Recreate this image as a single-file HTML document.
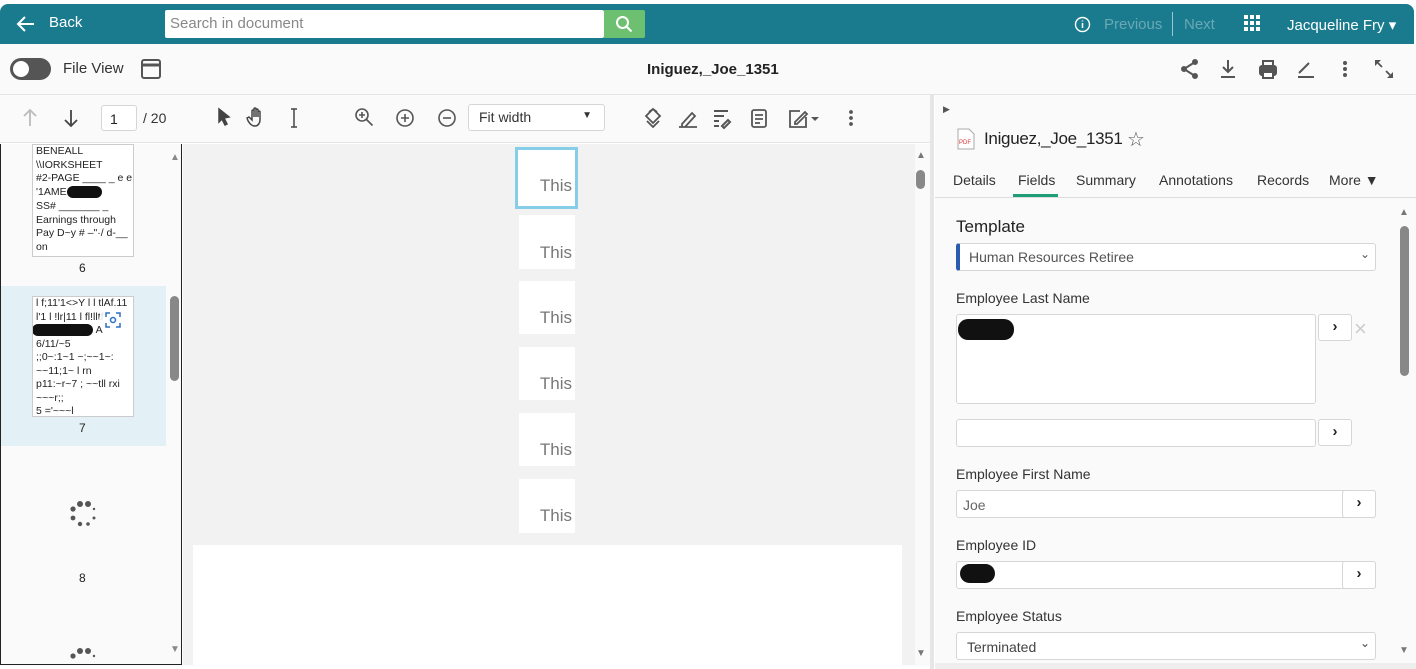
<!DOCTYPE html>
<html><head><meta charset="utf-8"><style>
*{box-sizing:border-box;margin:0;padding:0}
html,body{width:1416px;height:669px;overflow:hidden}
body{background:#fff;font-family:"Liberation Sans",sans-serif;color:#222;position:relative}
.a{position:absolute}
.hdr{left:0;top:4px;width:1414px;height:40px;background:#1a7b8e;border-radius:8px 8px 0 0}
.w{color:#fff;font-size:15px}
.lbl{font-size:14px;color:#333}
.inp{background:#fff;border:1px solid #d6d6d6;border-radius:3px}
.btn{background:#fff;border:1px solid #d6d6d6;border-radius:3px;font-weight:bold;font-size:15px;text-align:center;color:#222}
.pg{background:#fff;width:56px;font-size:17px;color:#777;text-align:right;padding-right:3px}
.th{font-size:10px;line-height:13.5px;color:#222;white-space:nowrap;overflow:hidden;padding-left:3px;background:#fff;border:1px solid #ccc}
</style></head><body>
<div class="a hdr"></div>
<svg class="a" style="left:16px;top:14px" width="20" height="20"><path d="M18 10H3M9 3L2 10l7 7" stroke="#fff" stroke-width="2" fill="none"/></svg>
<div class="a w" style="left:49px;top:14px">Back</div>
<div class="a" style="left:165px;top:10px;width:439px;height:28px;background:#fff;border-radius:2px"></div>
<div class="a" style="left:170px;top:15px;font-size:15px;color:#888">Search in document</div>
<div class="a" style="left:604px;top:10px;width:41px;height:28px;background:#6cc070;border-radius:0 2px 2px 0"></div>
<svg class="a" style="left:615px;top:15px" width="18" height="18"><circle cx="7.5" cy="7.5" r="5.5" stroke="#fff" stroke-width="2" fill="none"/><path d="M11.5 11.5l5 5" stroke="#fff" stroke-width="2"/></svg>
<svg class="a" style="left:1074px;top:16px" width="17" height="17"><circle cx="8.5" cy="8.5" r="7" stroke="#fff" stroke-width="1.4" fill="none"/><path d="M8.5 7v5M8.5 4.5v1" stroke="#fff" stroke-width="1.5"/></svg>
<div class="a" style="left:1104px;top:16px;font-size:15px;color:#6aa8b5">Previous</div>
<div class="a" style="left:1172px;top:12px;width:1px;height:24px;background:#9cc5cf"></div>
<div class="a" style="left:1184px;top:16px;font-size:15px;color:#6aa8b5">Next</div>
<svg class="a" style="left:1244px;top:15px" width="16" height="16" fill="#fff"><rect x="0" y="0" width="4" height="4"/><rect x="6" y="0" width="4" height="4"/><rect x="12" y="0" width="4" height="4"/><rect x="0" y="6" width="4" height="4"/><rect x="6" y="6" width="4" height="4"/><rect x="12" y="6" width="4" height="4"/><rect x="0" y="12" width="4" height="4"/><rect x="6" y="12" width="4" height="4"/><rect x="12" y="12" width="4" height="4"/></svg>
<div class="a w" style="left:1287px;top:16px">Jacqueline Fry ▾</div>

<div class="a" style="left:0;top:44px;width:1416px;height:51px;background:#fafafa;border-bottom:1px solid #e4e4e4"></div>
<div class="a" style="left:10px;top:58px;width:41px;height:22px;border-radius:11px;background:#555"></div>
<div class="a" style="left:13px;top:61px;width:16px;height:16px;border-radius:8px;background:#fff"></div>
<div class="a" style="left:63px;top:60px;font-size:15px;color:#333">File View</div>
<svg class="a" style="left:140px;top:58px" width="22" height="22"><rect x="2" y="2" width="18" height="18" rx="2" stroke="#555" stroke-width="2" fill="none"/><path d="M2 7h18" stroke="#555" stroke-width="3"/></svg>
<div class="a" style="left:647px;top:61px;font-size:15px;font-weight:bold;color:#222">Iniguez,_Joe_1351</div>
<svg class="a" style="left:1180px;top:59px" width="220" height="22" fill="none" stroke="#555" stroke-width="2">
<circle cx="15" cy="3" r="2" fill="#555"/><circle cx="4" cy="10" r="2" fill="#555"/><circle cx="15" cy="17" r="2" fill="#555"/><path d="M15 3L4 10l11 7"/>
<path d="M48 1v12M43 8l5 5 5-5M41 18h14"/>
<rect x="80" y="7" width="16" height="9" rx="2" fill="#555"/><rect x="83" y="2" width="10" height="5"/><rect x="83" y="13" width="10" height="6" fill="#fff"/>
<path d="M119 14l10-10M118 18h16"/>
<circle cx="165" cy="4" r="1" fill="#555"/><circle cx="165" cy="10" r="1" fill="#555"/><circle cx="165" cy="16" r="1" fill="#555"/>
<path d="M198 4l4 4M210 16l-4-4" stroke-width="1.8"/><path d="M195 1h6l-6 6zM213 19h-6l6-6z" fill="#555" stroke="none"/></svg>

<div class="a" style="left:0;top:95px;width:930px;height:48px;background:#fafafa;border-bottom:1px solid #e4e4e4"></div>
<svg class="a" style="left:20px;top:108px" width="60" height="20" fill="none" stroke-width="1.8"><path d="M10 2v16M4 8l6-6 6 6" stroke="#bbb"/><path d="M51 2v16M45 12l6 6 6-6" stroke="#444"/></svg>
<div class="a inp" style="left:101px;top:105px;width:36px;height:26px;font-size:14px;padding:5px 8px">1</div>
<div class="a lbl" style="left:143px;top:110px">/ 20</div>
<svg class="a" style="left:215px;top:106px" width="90" height="24" fill="none" stroke="#444" stroke-width="1.5"><path d="M4 3l10 8-5 1 3 6-2 1-3-6-3 3z" fill="#444"/><path d="M40 20c-4 0-7-4-8-8l2-1 3 3V5a1 1 0 012 0v6V3a1 1 0 012 0v8V4a1 1 0 012 0v7V6a1 1 0 012 0v8c0 3-2 6-5 6z"/><path d="M76 3h6M79 3v18M76 21h6"/></svg>
<svg class="a" style="left:353px;top:106px" width="110" height="24" fill="none" stroke="#555" stroke-width="1.6"><circle cx="9" cy="9" r="6"/><path d="M13.5 13.5l6 6M9 6v6M6 9h6"/><circle cx="52" cy="12" r="8"/><path d="M52 8v8M48 12h8"/><circle cx="94" cy="12" r="8"/><path d="M90 12h8"/></svg>
<div class="a inp" style="left:468px;top:104px;width:137px;height:27px;font-size:14px;padding:4px 10px;color:#333">Fit width<span style="position:absolute;right:12px;top:5px;font-size:10px">▼</span></div>
<svg class="a" style="left:642px;top:106px" width="220" height="24" fill="none" stroke="#555" stroke-width="1.8">
<path d="M11 3l7 7-7 7-7-7zM7 6l4-3 4 3M5 15l6 6 6-6"/>
<path d="M40 18l10-11 3 3-10 11h-3zM37 21h18" /><path d="M72 5h14M72 10h10M72 15h5M72 20h5M80 20l6-6 2 2-6 6z" stroke-width="2"/>
<rect x="110" y="4" width="14" height="17" rx="2"/><path d="M113 9h8M113 13h8M113 17h5"/>
<path d="M158 5h-10v16h16V11M153 16l10-10 2 2-10 10h-2z"/><path d="M169 11l4 4 4-4z" fill="#555" stroke="none"/>
<circle cx="209" cy="6" r="1" fill="#555"/><circle cx="209" cy="12" r="1" fill="#555"/><circle cx="209" cy="18" r="1" fill="#555"/></svg>

<!-- left panel -->
<div class="a" style="left:0;top:144px;width:182px;height:521px;border:1px solid #222;border-top:none;background:#fafafa;overflow:hidden">
<div class="a th" style="left:31px;top:0;width:102px;height:113px;line-height:13.7px;font-size:10.5px">BENEALL<br>\\IORKSHEET<br>#2-PAGE ____ _ e e<br>'1AME<span style="background:#111;border-radius:6px">&nbsp;&nbsp;&nbsp;&nbsp;&nbsp;&nbsp;&nbsp;&nbsp;&nbsp;&nbsp;&nbsp;&nbsp;</span><br>SS# _______ _<br>Earnings through<br>Pay D~y # –"·/ d-__<br>on<br>~</div>
<div class="a" style="left:78px;top:117px;font-size:12px">6</div>
<div class="a" style="left:0;top:142px;width:165px;height:160px;background:#e3f0f5"></div>
<div class="a th" style="left:31px;top:152px;width:102px;height:121px;font-size:10.5px">l f;11'1&lt;&gt;Y l l tlAf.11<br>l'1 l !lr|11 l fl!lltf<br><span style="background:#111;border-radius:8px;margin-left:-4px">&nbsp;&nbsp;&nbsp;&nbsp;&nbsp;&nbsp;&nbsp;&nbsp;&nbsp;&nbsp;&nbsp;&nbsp;&nbsp;&nbsp;&nbsp;&nbsp;&nbsp;&nbsp;&nbsp;&nbsp;&nbsp;</span> A<br>6/11/~5<br>;;0~:1~1 ~;~~1~:<br>~~11;1~ l rn<br>p11:~r~7 ; ~~tll rxi<br>~~~r;;<br>5 ='~~~l</div>
<div class="a" style="left:98px;top:162px;width:28px;height:28px;border-radius:14px;background:rgba(255,255,255,.85)"></div>
<svg class="a" style="left:104px;top:168px" width="16" height="16" fill="none" stroke="#2f6fc4" stroke-width="1.5"><path d="M1 5V1h4M11 1h4v4M15 11v4h-4M5 15H1v-4"/><circle cx="8" cy="8" r="2.5"/></svg>
<div class="a" style="left:78px;top:277px;font-size:12px">7</div>
<svg class="a" style="left:68px;top:357px" width="30" height="30" fill="#555"><circle cx="11" cy="3" r="3"/><circle cx="19" cy="3" r="3"/><circle cx="4" cy="8" r="2.6"/><circle cx="4" cy="17" r="2.4"/><circle cx="11" cy="23" r="2.2"/><circle cx="19" cy="23" r="1.8"/><circle cx="25" cy="17" r="1.5"/><circle cx="25" cy="8" r="1.2"/></svg>
<div class="a" style="left:78px;top:427px;font-size:12px">8</div>
<svg class="a" style="left:68px;top:504px" width="30" height="20" fill="#555"><circle cx="11" cy="3" r="3"/><circle cx="19" cy="3" r="3"/><circle cx="4" cy="8" r="2.6"/><circle cx="25" cy="8" r="1.2"/></svg>
<div class="a" style="left:168px;top:0;width:13px;height:521px;background:#fafafa"></div>
<div class="a" style="left:169px;top:8px;font-size:10px;color:#888">▲</div>
<div class="a" style="left:169px;top:152px;width:9px;height:85px;border-radius:5px;background:#888"></div>
<div class="a" style="left:169px;top:500px;font-size:10px;color:#888">▼</div>
</div>

<!-- center -->
<div class="a" style="left:183px;top:144px;width:732px;height:521px;background:#f2f2f2"></div>
<div class="a" style="left:193px;top:545px;width:709px;height:120px;background:#fff"></div>
<div class="a" style="left:515px;top:147px;width:63px;height:62px;border:3px solid #86cde8;background:#fff"></div>
<div class="a" style="left:519px;top:176px;width:56px;font-size:17px;color:#777;text-align:right;padding-right:3px">This</div>
<div class="a pg" style="left:519px;top:215px;height:54px;padding-top:28px">This</div>
<div class="a pg" style="left:519px;top:281px;height:53px;padding-top:27px">This</div>
<div class="a pg" style="left:519px;top:347px;height:53px;padding-top:27px">This</div>
<div class="a pg" style="left:519px;top:413px;height:53px;padding-top:27px">This</div>
<div class="a pg" style="left:519px;top:479px;height:54px;padding-top:27px">This</div>
<div class="a" style="left:915px;top:144px;width:15px;height:521px;background:#fafafa"></div>
<div class="a" style="left:916px;top:150px;font-size:10px;color:#777">▲</div>
<div class="a" style="left:916px;top:170px;width:9px;height:19px;border-radius:5px;background:#888"></div>
<div class="a" style="left:916px;top:648px;font-size:10px;color:#777">▼</div>
<div class="a" style="left:930px;top:95px;width:4px;height:574px;background:#e6e6e6"></div>

<!-- right panel -->
<div class="a" style="left:935px;top:95px;width:481px;height:574px;background:#fafafa"></div>
<div class="a" style="left:943px;top:104px;font-size:9px;color:#555">▶</div>
<svg class="a" style="left:957px;top:128px" width="18" height="22"><path d="M1 1h11l5 5v15H1z" fill="#fff" stroke="#aaa"/><text x="2" y="16" font-size="6" fill="#d33" font-family="Liberation Sans">PDF</text></svg>
<div class="a" style="left:984px;top:129px;font-size:17px;color:#222;letter-spacing:-0.3px">Iniguez,_Joe_1351</div>
<div class="a" style="left:1127px;top:127px;font-size:20px;color:#555">☆</div>
<div class="a lbl" style="left:953px;top:172px">Details</div>
<div class="a lbl" style="left:1018px;top:172px">Fields</div>
<div class="a" style="left:1013px;top:194px;width:45px;height:3px;background:#1f9d77"></div>
<div class="a lbl" style="left:1076px;top:172px">Summary</div>
<div class="a lbl" style="left:1159px;top:172px">Annotations</div>
<div class="a lbl" style="left:1257px;top:172px">Records</div>
<div class="a lbl" style="left:1329px;top:172px">More ▼</div>
<div class="a" style="left:935px;top:197px;width:481px;height:1px;background:#ddd"></div>
<div class="a" style="left:1397px;top:205px;width:19px;height:455px;background:#fafafa"></div>
<div class="a" style="left:1399px;top:207px;font-size:10px;color:#777">▲</div>
<div class="a" style="left:1400px;top:226px;width:9px;height:150px;border-radius:5px;background:#888"></div>
<div class="a" style="left:1399px;top:645px;font-size:10px;color:#777">▼</div>

<div class="a" style="left:956px;top:217px;font-size:17px;color:#222">Template</div>
<div class="a inp" style="left:956px;top:243px;width:420px;height:28px;border-left:4px solid #2a5db0;font-size:14px;color:#555;padding:5px 9px">Human Resources Retiree<span style="position:absolute;right:5px;top:3px;font-size:12px">⌄</span></div>
<div class="a lbl" style="left:956px;top:290px">Employee Last Name</div>
<div class="a inp" style="left:956px;top:314px;width:360px;height:90px"></div>
<div class="a" style="left:958px;top:319px;width:56px;height:21px;border-radius:10px;background:#111"></div>
<div class="a btn" style="left:1318px;top:314px;width:34px;height:27px;padding-top:3px">›</div>
<div class="a" style="left:1354px;top:316px;font-size:22px;color:#ccc">×</div>
<div class="a inp" style="left:956px;top:419px;width:360px;height:28px"></div>
<div class="a btn" style="left:1318px;top:419px;width:34px;height:27px;padding-top:3px">›</div>
<div class="a lbl" style="left:956px;top:466px">Employee First Name</div>
<div class="a inp" style="left:956px;top:490px;width:420px;height:28px;font-size:14px;color:#666;padding:6px 6px">Joe</div>
<div class="a btn" style="left:1342px;top:490px;width:34px;height:28px;padding-top:3px">›</div>
<div class="a lbl" style="left:956px;top:537px">Employee ID</div>
<div class="a inp" style="left:956px;top:561px;width:420px;height:28px"></div>
<div class="a" style="left:960px;top:564px;width:35px;height:19px;border-radius:10px;background:#111"></div>
<div class="a btn" style="left:1342px;top:561px;width:34px;height:28px;padding-top:3px">›</div>
<div class="a lbl" style="left:956px;top:608px">Employee Status</div>
<div class="a inp" style="left:956px;top:632px;width:420px;height:28px;font-size:14px;color:#444;padding:6px 10px">Terminated<span style="position:absolute;right:5px;top:3px;font-size:12px">⌄</span></div>
<div class="a" style="left:935px;top:663px;width:481px;height:6px;background:#eee"></div>
</body></html>
